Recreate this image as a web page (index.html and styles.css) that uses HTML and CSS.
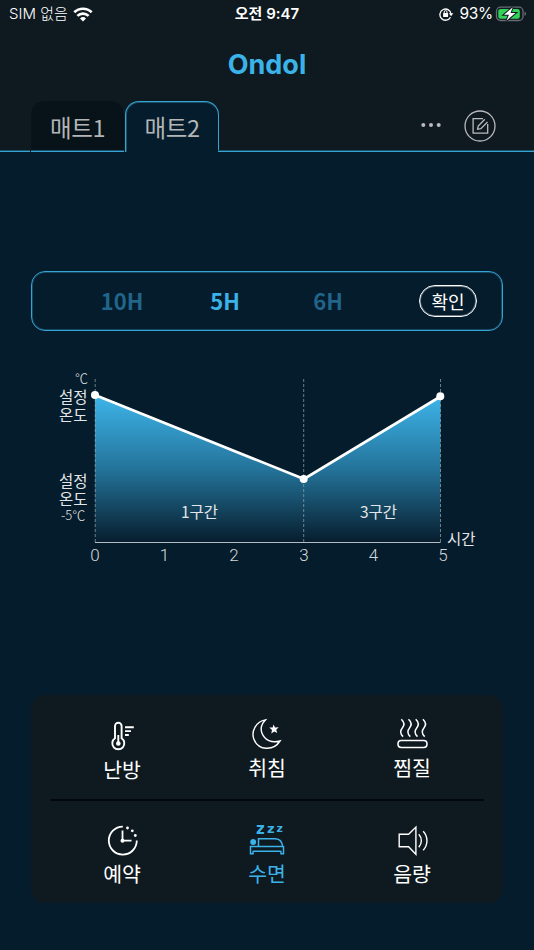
FILE: index.html
```
<!DOCTYPE html>
<html lang="ko">
<head>
    <meta charset="UTF-8">
    <meta name="viewport" content="width=device-width, initial-scale=1.0">
    <title>Ondol</title>
    <link rel="stylesheet" href="styles.css">
</head>
<body>
    <header class="header">
        <div class="status-bar">
            <div class="status-left">
                <span class="carrier">SIM 없음</span>
                <svg class="wifi" width="20" height="15" viewBox="0 0 20 15">
                    <g fill="none" stroke="#fff" stroke-width="2.7">
                        <path d="M1.3 5.3a12.4 12.4 0 0 1 17.4 0"/>
                        <path d="M4.4 8.9a8 8 0 0 1 11.2 0"/>
                    </g>
                    <path d="M10 14.6l-3-3.1a4.3 4.3 0 0 1 6 0z" fill="#fff"/>
                </svg>
            </div>
            <div class="time">오전 9:47</div>
            <div class="status-right">
                <svg width="15" height="14" viewBox="0 0 15 14">
                    <path d="M11.5 10.2A5.6 5.6 0 1 1 12.1 7.2" fill="none" stroke="#fff" stroke-width="1.3"/>
                    <path d="M9.9 6.2h4.4l-2.2 3z" fill="#fff"/>
                    <rect x="4.1" y="6.1" width="5" height="4" rx=".6" fill="#fff"/>
                    <path d="M5.2 6.3V5a1.4 1.4 0 0 1 2.8 0v1.3" fill="none" stroke="#fff"/>
                </svg>
                <span class="percent">93%</span>
                <svg class="battery" width="32" height="16" viewBox="0 0 32 16">
                    <rect x="1.5" y="1.2" width="26.5" height="13.3" rx="4" fill="none" stroke="#656c71" stroke-width="1.3"/>
                    <path d="M29.5 5.5v4.5q1.6-.6 1.6-2.2t-1.6-2.3z" fill="#656c71"/>
                    <rect x="3.3" y="3" width="21.5" height="9.8" rx="2.3" fill="#32d158"/>
                    <path class="bolt" d="M17.8 1.2L9 8.7h5l-2.6 6 9.100-7.600h-5z"/>
                </svg>
            </div>
        </div>
        <h1 class="logo">Ondol</h1>
        <nav class="tabs">
            <button class="tab">매트1</button>
            <button class="tab active">매트2</button>
            <div class="tab-actions">
                <button class="icon-btn">
                    <svg width="22" height="6" viewBox="0 0 22 6" fill="#b9bbbc">
                        <circle cx="3.3" cy="2" r="2"/>
                        <circle cx="11" cy="2" r="2"/>
                        <circle cx="18.7" cy="2" r="2"/>
                    </svg>
                </button>
                <button class="icon-btn">
                    <svg width="32" height="32" viewBox="0 0 32 32" fill="none" stroke="#b9bbbc" stroke-width="1.3">
                        <circle cx="16" cy="16" r="15"/>
                        <path d="M19 8.6H9.1v14.5h14.6V14"/>
                        <path d="M20.800 9.300l-6.600 6.800-.6 3.200 3.300-.6 6.600-6.700"/>
                    </svg>
                </button>
            </div>
        </nav>
    </header>

    <main class="content">
        <section class="hours">
            <button class="hour">10H</button>
            <button class="hour selected">5H</button>
            <button class="hour">6H</button>
            <button class="confirm">확인</button>
        </section>

        <svg class="chart" width="534" height="215" viewBox="0 360 534 215">
            <defs>
                <linearGradient id="heat" x1="0" y1="395" x2="0" y2="542" gradientUnits="userSpaceOnUse">
                    <stop offset="0" stop-color="#3eb5ea"/>
                    <stop offset="0.5" stop-color="#24749b"/>
                    <stop offset="1" stop-color="#071e2e"/>
                </linearGradient>
            </defs>
            <path d="M95 395L304 479L440.5 396.5V542H95z" fill="url(#heat)"/>
            <path class="guide" d="M95.2 379V542M303.7 379V542M440.5 379V542"/>
            <path d="M95 542.5H440.5" stroke="#b4bcc1" stroke-width="1.2"/>
            <path d="M95 395L304 479L440.5 396.5" fill="none" stroke="#fff" stroke-width="2.7"/>
            <g fill="#fff">
                <circle cx="95" cy="395" r="4"/>
                <circle cx="303.7" cy="479" r="4"/>
                <circle cx="440.3" cy="396.3" r="4"/>
            </g>
            <g class="y-label">
                <text class="unit" x="75" y="382.5">℃</text>
                <text x="59" y="403">설정</text>
                <text x="59" y="421">온도</text>
                <text x="59" y="487">설정</text>
                <text x="59" y="505">온도</text>
                <text class="unit" x="61" y="519.5">-5℃</text>
            </g>
            <g class="zone">
                <text x="199.5" y="517.5">1구간</text>
                <text x="378.5" y="517.5">3구간</text>
            </g>
            <g class="x-label">
                <text x="95" y="561">0</text>
                <text x="164.5" y="561">1</text>
                <text x="234" y="561">2</text>
                <text x="304" y="561">3</text>
                <text x="373.5" y="561">4</text>
                <text x="443" y="561">5</text>
            </g>
            <text class="x-title" x="447" y="545">시간</text>
        </svg>

        <section class="menu">
            <div class="menu-row">
                <button class="menu-item heat">
                    <svg width="36" height="32" viewBox="0 0 36 32" fill="none" stroke="#fff" stroke-width="1.9">
                        <path d="M11 18.300V6a3.300 3.300 0 0 1 6.600 0v12.300a6 6 0 1 1-6.600 0z"/>
                        <path d="M14.300 15v9M21 7.200h8.800M21 11.100h6M21 15h3.800"/>
                        <circle cx="14.300" cy="23.500" r="2.300" fill="#fff" stroke="none"/>
                    </svg>
                    <span>난방</span>
                </button>
                <button class="menu-item">
                    <svg width="36" height="32" viewBox="0 0 36 32" fill="none" stroke="#fff" stroke-width="1.4">
                        <path d="M16.4 1.9C7.3 3.400 1.8 13.200 4.900 21.200c4.500 11.500 19.600 12 26.100 1.800-8.400 2.400-15.200-.7-18-7.700-1.800-4.700-.7-9.200 3.400-13.400z"/>
                        <path d="M24.500 6.500l1.500 3 3.700-.3-2.500 2.500 1 3.400-2.900-1.700-3 2.100.7-3.600-2.700-2.300 3.400-.2z" fill="#fff" stroke="none"/>
                    </svg>
                    <span>취침</span>
                </button>
                <button class="menu-item">
                    <svg width="36" height="32" viewBox="0 0 36 32" fill="none" stroke="#fff" stroke-width="1.5">
                        <path d="M7.300 1.300c4 3.700 3 6.300 1 8.700s-3 5 .8 8.600M14.500 1.300c4 3.700 3 6.300 1 8.700s-3 5 .8 8.600M21.700 1.300c4 3.700 3 6.300 1 8.700s-3 5 .8 8.600M28.900 1.300c4 3.700 3 6.300 1 8.700s-3 5 .8 8.600"/>
                        <rect x="4" y="22.500" width="29" height="7" rx="3.200"/>
                    </svg>
                    <span>찜질</span>
                </button>
            </div>
            <div class="menu-row">
                <button class="menu-item">
                    <svg width="36" height="32" viewBox="0 0 36 32" fill="none" stroke="#fff" stroke-width="1.8">
                        <path d="M18.800 2.600A14 14 0 1 0 32.800 16.600M18.500 6.500v10.200h9"/>
                        <g fill="#fff" stroke="none">
                            <circle cx="18.500" cy="16.700" r="2"/>
                            <circle cx="23.500" cy="4" r="1.400"/>
                            <circle cx="28.300" cy="6.800" r="1.400"/>
                            <circle cx="31.300" cy="11.500" r="1.400"/>
                        </g>
                    </svg>
                    <span>예약</span>
                </button>
                <button class="menu-item selected">
                    <svg class="sleep" width="36" height="32" viewBox="0 0 36 32" fill="none" stroke="#3bb3e9" stroke-width="1.5">
                        <g class="snore">
                            <text x="7" y="9.800" font-size="15">z</text>
                            <text x="18" y="8.800" font-size="13">z</text>
                            <text x="27.500" y="7.800" font-size="11">z</text>
                        </g>
                        <path d="M9.500 22.500v-7.800h17c4.500.3 6.700 3.600 7 7.800"/>
                        <path d="M1.500 29.700v-7.200h33v7.200h-2.500v-1.800q0-.7-.8-.7H4.800q-.8 0-.8.700v1.800z"/>
                        <circle cx="4.200" cy="18" r="3" fill="#3bb3e9" stroke="none"/>
                    </svg>
                    <span>수면</span>
                </button>
                <button class="menu-item">
                    <svg width="36" height="32" viewBox="0 0 36 32" fill="none" stroke="#fff" stroke-width="1.4">
                        <path d="M5.200 10.300h9.400l7.300-7.200v27.200l-7.300-7.600H5.200zM24.800 10.300c3.400 3.700 3.400 9.100 0 13M29.200 7.200c5 5.500 5 13.300 0 19"/>
                    </svg>
                    <span>음량</span>
                </button>
            </div>
        </section>
    </main>
</body>
</html>
```
FILE: styles.css
```
* {
    margin: 0;
    padding: 0;
    box-sizing: border-box;
}

body {
    width: 534px;
    height: 950px;
    font-family: 'Noto Sans CJK KR', sans-serif;
    background: #041c2b;
    color: #fff;
    overflow: hidden;
}

button {
    background: none;
    border: none;
    color: inherit;
    font-family: inherit;
    cursor: pointer;
}

svg {
    display: block;
}

.header {
    height: 152px;
    background: #0f1920;
    display: flex;
    flex-direction: column;
}

.status-bar {
    height: 28px;
    padding: 0 7px 0 9px;
    display: grid;
    grid-template-columns: 1fr auto 1fr;
    align-items: center;
    font-family: Inter, 'Noto Sans CJK KR', sans-serif;
    font-size: 15px;
    line-height: 28px;
}

.status-left, .status-right {
    display: flex;
    align-items: center;
    gap: 5px;
}

.status-right {
    justify-content: flex-end;
}

.carrier {
    font-weight: 300;
}

.time {
    margin-left: -2px;
    font-weight: 600;
}

.percent {
    font-size: 15.5px;
    letter-spacing: -0.3px;
}

.battery {
    margin-left: -3px;
}

.bolt {
    fill: #fff;
    stroke: #0f1920;
    stroke-width: 2;
    paint-order: stroke;
}

.logo {
    height: 72px;
    line-height: 73px;
    text-align: center;
    font-family: Inter, sans-serif;
    font-size: 27px;
    font-weight: 700;
    color: #3bb3e9;
}

.tabs {
    height: 52px;
    margin-top: auto;
    display: flex;
    gap: 1px;
}

.tabs::before {
    content: '';
    width: 30px;
    border-bottom: 1px solid #35a3d3;
    box-shadow: inset 0 -1px #1c5067;
}

.tab {
    width: 93px;
    height: 51px;
    margin-top: 1px;
    border-bottom: 1px solid #35a3d3;
    border-radius: 14px 14px 0 0;
    box-shadow: inset 0 -1px #1c5067;
    background: #081319;
    color: #b4b5b6;
    font-size: 23.5px;
    letter-spacing: -0.4px;
    line-height: 52px;
}

.tab.active {
    width: 94px;
    border: 1px solid #35a3d3;
    border-bottom: none;
    box-shadow: inset 0 1px #1c5067, inset 1px 0 #1c5067;
    background: #041c2b;
    line-height: 50px;
}

.tab-actions {
    flex: 1;
    margin-left: -2px;
    padding-right: 38px;
    border-bottom: 1px solid #35a3d3;
    box-shadow: inset 0 -1px #1c5067;
    display: flex;
    justify-content: flex-end;
    align-items: center;
    gap: 22px;
}

.content {
    padding-top: 119px;
}

.hours {
    height: 60px;
    margin: 0 31px;
    padding-right: 25px;
    border: 1px solid #35a3d3;
    border-radius: 14px;
    box-shadow: inset 0 0 0 1px #154961;
    display: flex;
    align-items: center;
}

.hour {
    width: 103px;
    color: #21658a;
    font-size: 22px;
    font-weight: 700;
    line-height: 56px;
    padding-bottom: 2px;
}

.hour:first-child {
    margin-left: 38.5px;
}

.hour.selected {
    color: #3bb3e9;
}

.confirm {
    width: 58px;
    height: 32px;
    margin-left: auto;
    border: 1px solid #fff;
    border-radius: 16px;
    box-shadow: inset 0 0 0 1px rgba(255, 255, 255, 0.4);
    font-size: 18px;
    line-height: 30px;
}

.chart {
    margin-top: 29px;
}

.guide {
    stroke: #9aa5ac;
    stroke-opacity: 0.7;
    stroke-width: 1;
    stroke-dasharray: 3 2;
}

.y-label, .zone, .x-title {
    fill: #e3e6e8;
    font-size: 15.5px;
}

.unit {
    font-size: 13px;
    font-weight: 300;
}

.zone, .x-label {
    text-anchor: middle;
}

.x-label {
    fill: #d5d9db;
    font-family: Roboto, sans-serif;
    font-size: 17px;
    font-weight: 300;
}

.menu {
    height: 208px;
    margin: 120px 31px 0;
    padding: 0 19px 0 20px;
    border-radius: 14px;
    background: #0f1920;
}

.menu-row {
    height: 104px;
    display: flex;
    gap: 3px;
    padding-top: 23px;
}

.menu-row + .menu-row {
    border-top: 2px solid #02070b;
}

.menu-item {
    width: 142px;
    display: flex;
    flex-direction: column;
    align-items: center;
    gap: 1px;
    font-size: 20.5px;
    line-height: 32px;
}

.menu-item.heat {
    padding-top: 2px;
}

.menu-item.selected {
    color: #3bb3e9;
}

.sleep {
    overflow: visible;
}

.snore {
    fill: #3bb3e9;
    stroke: none;
    font-family: 'DejaVu Sans', sans-serif;
    font-weight: 700;
}
```
